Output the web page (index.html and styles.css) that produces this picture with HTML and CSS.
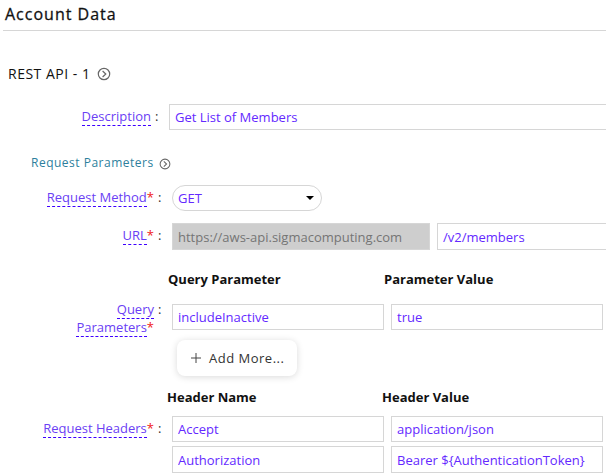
FILE: index.html
```html
<!DOCTYPE html>
<html lang="en">
<head>
<meta charset="utf-8">
<title>Account Data</title>
<link rel="stylesheet" href="styles.css">
</head>
<body>
<main class="panel">
  <h1 class="panel-title">Account Data</h1>

  <h2 class="api-title">REST API - 1
    <svg class="chevron" viewBox="0 0 14 14" aria-hidden="true"><circle cx="7" cy="7" r="5.7"/><path d="M5.6 4 8.8 7 5.6 10"/></svg>
  </h2>

  <div class="row row-description">
    <label class="label" for="description"><span class="term">Description</span></label>
    <span class="colon">:</span>
    <input class="field field-open" id="description" type="text" value="Get List of Members">
  </div>

  <h3 class="section-title">Request Parameters
    <svg class="chevron chevron-small" viewBox="0 0 14 14" aria-hidden="true"><circle cx="7" cy="7" r="5.7"/><path d="M5.6 4 8.8 7 5.6 10"/></svg>
  </h3>

  <div class="row row-method">
    <label class="label" for="method"><span class="term">Request Method</span><span class="required">*</span></label>
    <span class="colon">:</span>
    <div class="select-box">
      <select class="select" id="method"><option>GET</option><option>POST</option></select>
      <svg class="caret" viewBox="0 0 8 4" aria-hidden="true"><path d="M0 0h8L4 4z"/></svg>
    </div>
  </div>

  <div class="row row-url">
    <label class="label" for="url"><span class="term">URL</span><span class="required">*</span></label>
    <span class="colon">:</span>
    <div class="url-fields">
      <input class="field field-tall field-base" type="text" value="https://aws-api.sigmacomputing.com" aria-label="Base URL" disabled>
      <input class="field field-tall field-open" id="url" type="text" value="/v2/members">
    </div>
  </div>

  <div class="heads heads-query">
    <span id="qp">Query Parameter</span>
    <span id="qv">Parameter Value</span>
  </div>
  <div class="row row-query">
    <label class="label" for="query"><span class="term">Query</span><br><span class="term">Parameters</span><span class="required">*</span></label>
    <span class="colon">:</span>
    <div class="pairs">
      <input class="field" id="query" type="text" value="includeInactive">
      <input class="field" type="text" value="true" aria-labelledby="qv">
      <button class="add" type="button"><svg class="plus" viewBox="0 0 10 10" aria-hidden="true"><path d="M5 0v10M0 5h10"/></svg>Add More...</button>
    </div>
  </div>

  <div class="heads heads-header">
    <span id="hn">Header Name</span>
    <span id="hv">Header Value</span>
  </div>
  <div class="row">
    <label class="label" for="header"><span class="term">Request Headers</span><span class="required">*</span></label>
    <span class="colon">:</span>
    <div class="pairs">
      <input class="field" id="header" type="text" value="Accept">
      <input class="field" type="text" value="application/json" aria-labelledby="hv">
      <input class="field field-tall" type="text" value="Authorization" aria-labelledby="hn">
      <input class="field field-tall" type="text" value="Bearer ${AuthenticationToken}" aria-labelledby="hv">
    </div>
  </div>
</main>
</body>
</html>
```
FILE: styles.css
```css
* {
  box-sizing: border-box;
}

body {
  margin: 0;
  background: #fff;
  color: #111;
  font: 13px/18px "Open Sans", "Noto Sans", sans-serif;
}

h1, h2, h3 {
  margin: 0;
  font-weight: 400;
}

input, select, button {
  margin: 0;
  font: inherit;
}

.panel-title {
  margin-left: 3px;
  padding: 3px 2px 5px;
  border-bottom: 1px solid #d6d6d6;
  font-size: 16px;
  font-weight: 500;
  line-height: 22px;
  letter-spacing: 1px;
  -webkit-text-stroke: 0.3px #111;
}

.api-title {
  display: flex;
  align-items: center;
  gap: 7px;
  margin: 33px 0 0 8px;
  font-size: 14px;
  line-height: 20px;
  letter-spacing: 0.5px;
}

.section-title {
  display: flex;
  align-items: center;
  gap: 5px;
  margin: 24px 0 0 31px;
  color: #2d7f9d;
  font-size: 12px;
  letter-spacing: 0.5px;
}

.chevron {
  width: 14px;
  height: 14px;
  fill: none;
  stroke: #666;
  stroke-width: 1.2;
}

.chevron-small {
  width: 12px;
  height: 12px;
  margin-top: 2px;
}

.row {
  display: grid;
  grid-template-columns: 154px 10px minmax(0, 1fr);
  column-gap: 4px;
  align-items: start;
}

.row-description {
  grid-template-columns: 151px 10px minmax(0, 1fr);
  margin-top: 20px;
}

.row-method {
  margin-top: 13px;
}

.row-url {
  margin-top: 12px;
}

.label {
  padding-top: 3px;
  color: #6a40f4;
  text-align: right;
}

.term {
  border-bottom: 1px dashed #3d00ff;
}

.required {
  color: #f01818;
}

.colon {
  padding-top: 3px;
  color: #333;
}

.row-query .label,
.row-query .colon {
  padding-top: 0;
}

.row-query .pairs {
  padding-top: 4px;
}

.field {
  display: block;
  width: 100%;
  min-width: 0;
  height: 26px;
  padding: 0 5px;
  border: 1px solid #d6d6d6;
  border-radius: 0;
  background: #fff;
  color: #6429ff;
}

.field-tall {
  height: 27px;
}

.field-open {
  border-right: 0;
}

.field-base {
  background: #cecece;
  color: #757575;
}

.select-box {
  position: relative;
  width: 150px;
}

.select {
  display: block;
  width: 100%;
  height: 26px;
  padding: 0 5px;
  border: 1px solid #d6d6d6;
  border-radius: 13px;
  appearance: none;
  background: #fff;
  color: #6429ff;
}

.caret {
  position: absolute;
  top: 11px;
  right: 8px;
  width: 8px;
  height: 4px;
}

.url-fields {
  display: grid;
  grid-template-columns: 258px minmax(0, 1fr);
  gap: 7px;
}

.heads {
  display: grid;
  font-weight: 700;
}

.heads-query {
  grid-template-columns: 216px 1fr;
  margin: 20px 0 12px 168px;
}

.heads-header {
  grid-template-columns: 215px 1fr;
  margin: 12px 0 10px 167px;
}

.pairs {
  display: grid;
  grid-template-columns: 1fr 1fr;
  gap: 4px 7px;
  padding-right: 3px;
}

.add {
  display: flex;
  grid-column: 1 / -1;
  justify-self: start;
  align-items: center;
  gap: 8px;
  height: 36px;
  margin: 6px 0 0 5px;
  padding: 0 13px 0 14px;
  border: 0;
  border-radius: 8px;
  background: #fff;
  box-shadow: 0 1px 7px rgb(0 0 0 / 15%);
  color: #333;
  letter-spacing: 0.5px;
}

.plus {
  width: 10px;
  height: 10px;
  fill: none;
  stroke: #444;
}
```
